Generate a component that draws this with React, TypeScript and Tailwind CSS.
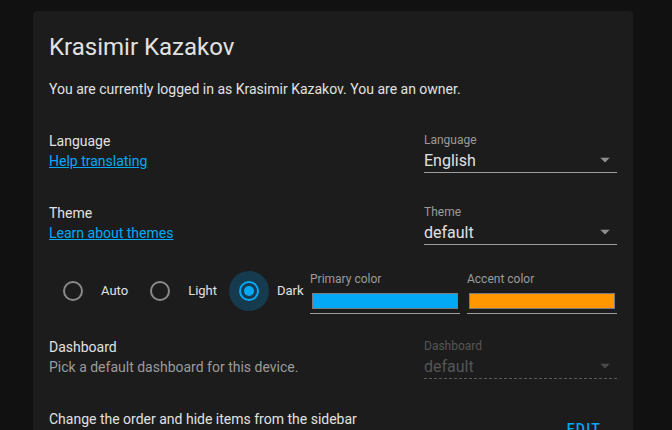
const BLUE = '#03a9f4';

function Arrow({ disabled = false }: { disabled?: boolean }) {
  return (
    <svg
      width="10"
      height="5"
      viewBox="0 0 10 5"
      className="absolute right-[7px] top-1/2 -translate-y-1/2"
      aria-hidden
    >
      <path d="M0 0h10L5 5z" fill={disabled ? '#4a4a4a' : '#8f8f8f'} />
    </svg>
  );
}

function Select({
  label,
  value,
  disabled = false,
}: {
  label: string;
  value: string;
  disabled?: boolean;
}) {
  return (
    <div
      className={`mt-px w-[193px] ${
        disabled ? 'border-b border-dashed border-[#5a5a5a]' : 'border-b border-[#9e9e9e]'
      }`}
    >
      <div className={`text-[12px] leading-4 ${disabled ? 'text-[#555555]' : 'text-[#9b9b9b]'}`}>
        {label}
      </div>
      <div className="relative">
        <div
          className={`pt-px text-[16px] leading-[23px] ${
            disabled ? 'text-[#555555]' : 'text-[#e1e1e1]'
          }`}
        >
          {value}
        </div>
        <Arrow disabled={disabled} />
      </div>
    </div>
  );
}

function Radio({ label, checked = false }: { label: string; checked?: boolean }) {
  return (
    <div className="flex items-center">
      <div
        className={`flex h-10 w-10 items-center justify-center rounded-full ${
          checked ? 'bg-[#163b4f]' : ''
        }`}
      >
        <div
          className={`flex h-5 w-5 items-center justify-center rounded-full border-2 ${
            checked ? 'border-[#03a9f4]' : 'border-[#8a8a8a]'
          }`}
        >
          {checked && <div className="h-2.5 w-2.5 rounded-full bg-[#03a9f4]" />}
        </div>
      </div>
      <span className="ml-2 text-[13px] leading-5 text-[#e1e1e1]">{label}</span>
    </div>
  );
}

function ColorField({ label, color }: { label: string; color: string }) {
  return (
    <div className="w-[150px] border-b border-[#9e9e9e] pb-1">
      <div className="text-[12px] leading-4 text-[#9b9b9b]">{label}</div>
      <div className="mx-[2px] mt-[6px] h-4 border border-[#7a7a7a]" style={{ background: color }} />
    </div>
  );
}

function Row({
  heading,
  children,
  link,
  description,
}: {
  heading: string;
  link?: string;
  description?: string;
  children?: React.ReactNode;
}) {
  return (
    <div className="flex items-start justify-between">
      <div className="text-sm leading-5">
        <div className="text-[#e1e1e1]">{heading}</div>
        {link && (
          <a href="#" className="underline" style={{ color: BLUE }}>
            {link}
          </a>
        )}
        {description && <div className="text-[#9b9b9b]">{description}</div>}
      </div>
      {children}
    </div>
  );
}

export default function App() {
  return (
    <div
      className="min-h-screen bg-[#111111] pt-[11px]"
      style={{ fontFamily: 'Roboto, "Noto Sans", sans-serif' }}
    >
      <div className="ml-[33px] w-[600px] rounded bg-[#1c1c1c] px-4 pt-5 pb-6">
        <h1 className="text-[24px] leading-8 font-normal text-[#e1e1e1]">Krasimir Kazakov</h1>
        <p className="mt-4 text-sm leading-5 text-[#e1e1e1]">
          You are currently logged in as Krasimir Kazakov. You are an owner.
        </p>

        <div className="mt-8">
          <Row heading="Language" link="Help translating">
            <Select label="Language" value="English" />
          </Row>
        </div>

        <div className="mt-[30px]">
          <Row heading="Theme" link="Learn about themes">
            <Select label="Theme" value="default" />
          </Row>
        </div>

        <div className="mt-[26px] flex items-start justify-between">
          <div className="ml-1 flex items-center gap-3">
            <Radio label="Auto" />
            <Radio label="Light" />
            <Radio label="Dark" checked />
          </div>
          <div className="flex gap-[7px]">
            <ColorField label="Primary color" color="#03a9f4" />
            <ColorField label="Accent color" color="#ff9800" />
          </div>
        </div>

        <div className="mt-[23px]">
          <Row heading="Dashboard" description="Pick a default dashboard for this device.">
            <Select label="Dashboard" value="default" disabled />
          </Row>
        </div>

        <div className="mt-[30px] flex items-center justify-between">
          <div className="text-sm leading-5">
            <div className="text-[#e1e1e1]">Change the order and hide items from the sidebar</div>
            <div className="text-[#9b9b9b]">
              You can also press and hold the header of the sidebar to activate edit mode.
            </div>
          </div>
          <button
            className="mr-2 h-9 px-2 text-sm font-medium uppercase tracking-[1.25px]"
            style={{ color: BLUE }}
          >
            Edit
          </button>
        </div>
      </div>
    </div>
  );
}
